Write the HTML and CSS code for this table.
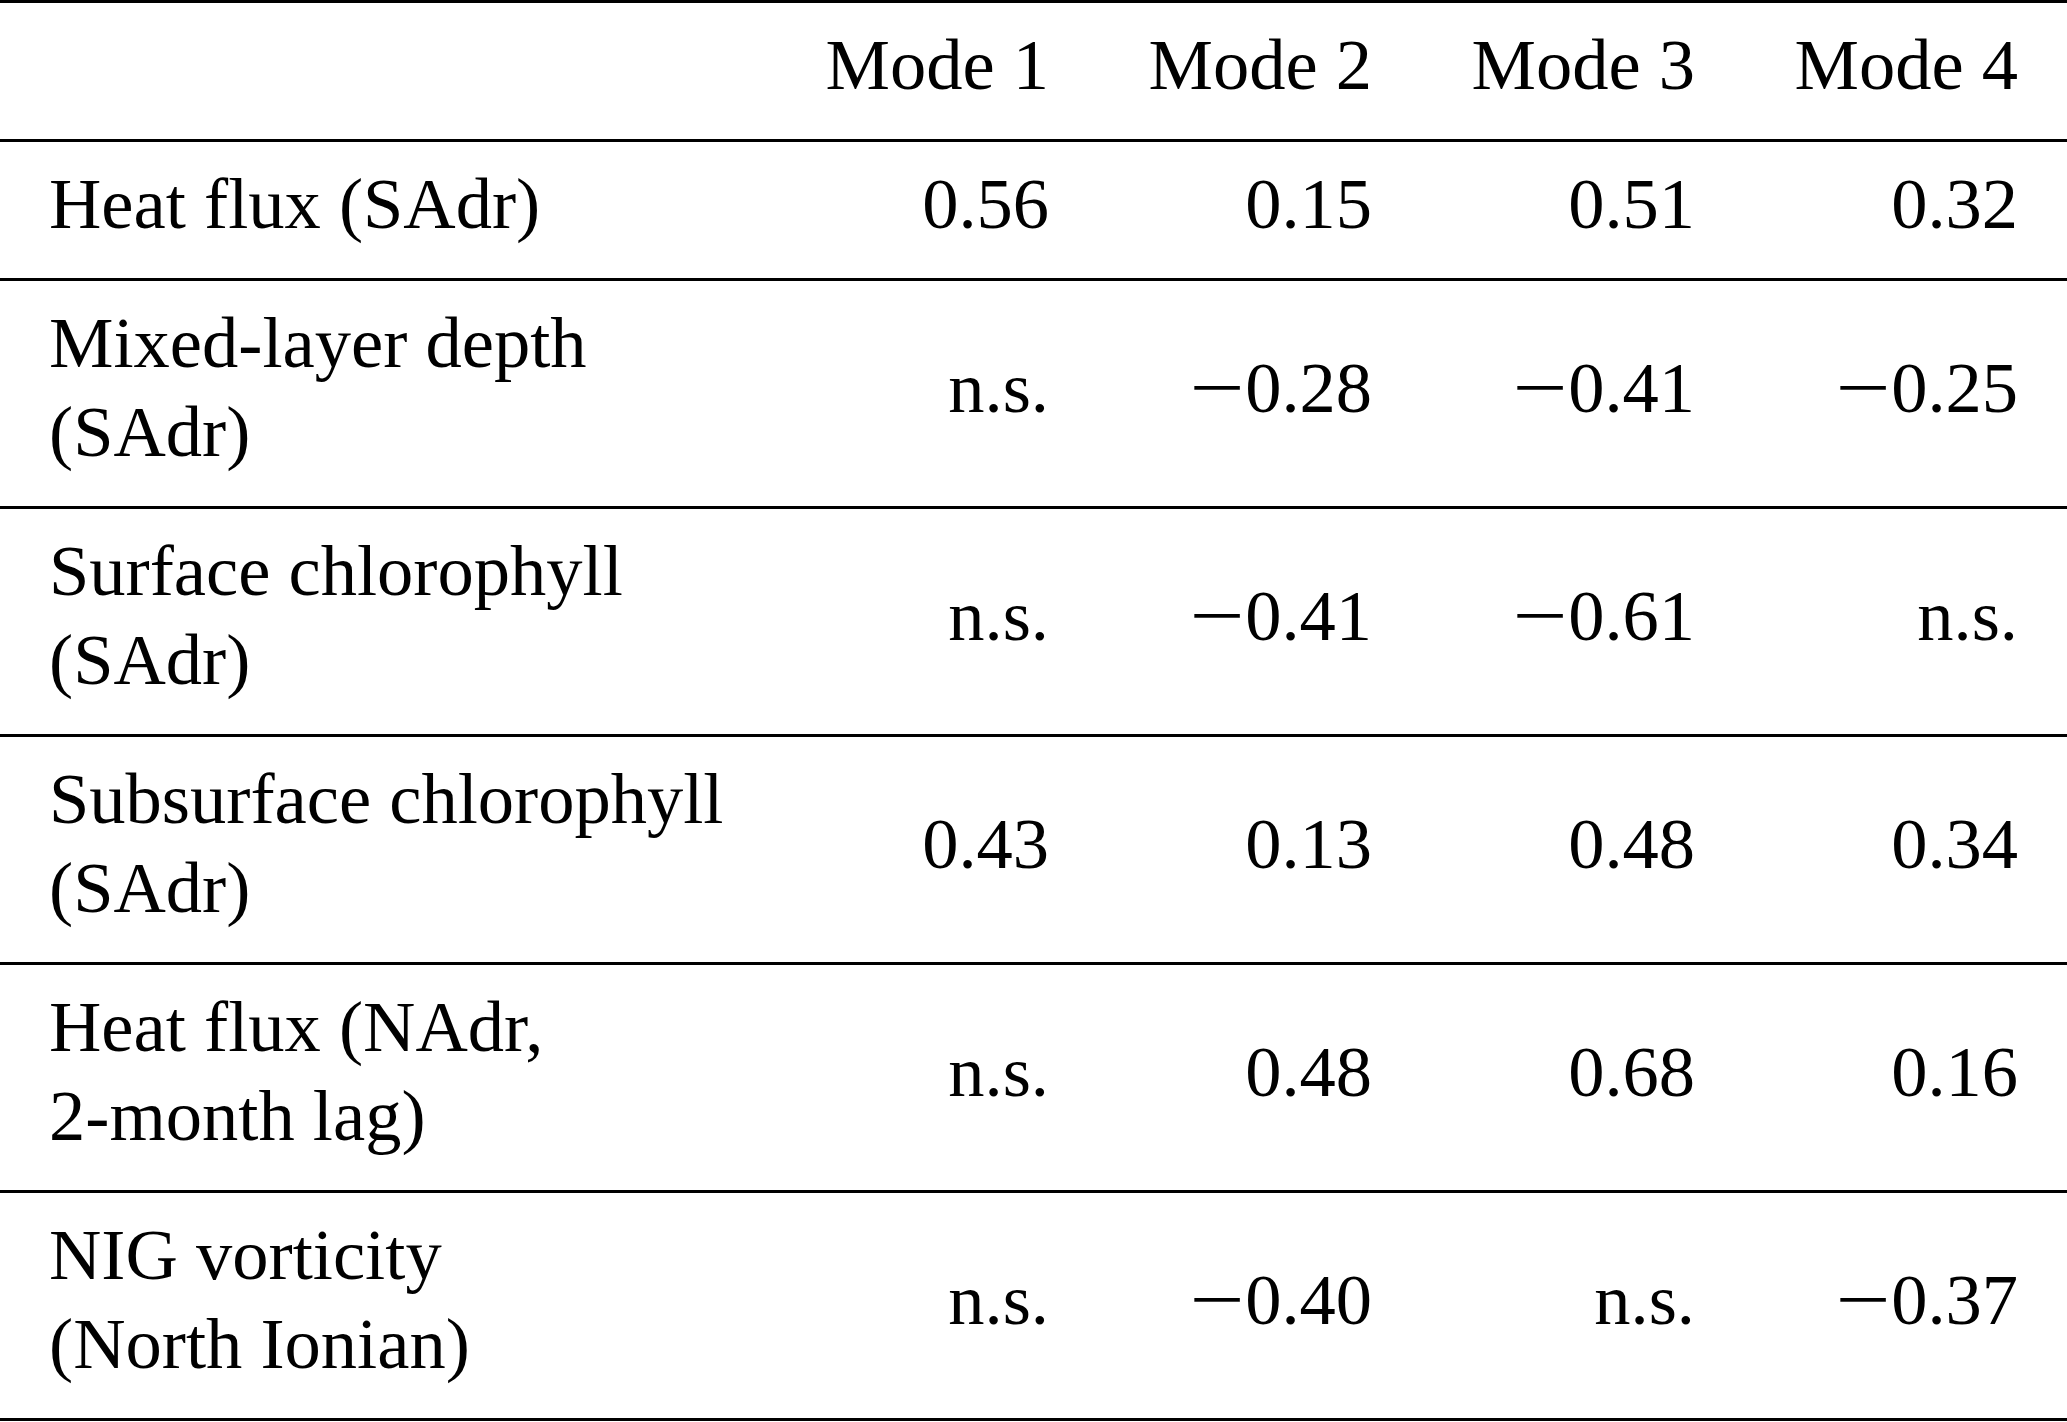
FILE: index.html
```html
<!DOCTYPE html>
<html lang="en">
<head>
<meta charset="utf-8">
<title>Mode correlations</title>
<link rel="stylesheet" href="styles.css">
</head>
<body>
<table class="corr">
  <colgroup>
    <col class="c-label">
    <col class="c-num">
    <col class="c-num">
    <col class="c-num">
    <col class="c-num">
  </colgroup>
  <thead>
    <tr>
      <th class="label"></th>
      <th class="num">Mode 1</th>
      <th class="num">Mode 2</th>
      <th class="num">Mode 3</th>
      <th class="num">Mode 4</th>
    </tr>
  </thead>
  <tbody>
    <tr>
      <td class="label">Heat flux (SAdr)</td>
      <td class="num">0.56</td>
      <td class="num">0.15</td>
      <td class="num">0.51</td>
      <td class="num">0.32</td>
    </tr>
    <tr>
      <td class="label">Mixed-layer depth<br>(SAdr)</td>
      <td class="num">n.s.</td>
      <td class="num"><span class="minus">−</span>0.28</td>
      <td class="num"><span class="minus">−</span>0.41</td>
      <td class="num"><span class="minus">−</span>0.25</td>
    </tr>
    <tr>
      <td class="label">Surface chlorophyll<br>(SAdr)</td>
      <td class="num">n.s.</td>
      <td class="num"><span class="minus">−</span>0.41</td>
      <td class="num"><span class="minus">−</span>0.61</td>
      <td class="num">n.s.</td>
    </tr>
    <tr>
      <td class="label">Subsurface chlorophyll<br>(SAdr)</td>
      <td class="num">0.43</td>
      <td class="num">0.13</td>
      <td class="num">0.48</td>
      <td class="num">0.34</td>
    </tr>
    <tr>
      <td class="label">Heat flux (NAdr,<br>2-month lag)</td>
      <td class="num">n.s.</td>
      <td class="num">0.48</td>
      <td class="num">0.68</td>
      <td class="num">0.16</td>
    </tr>
    <tr>
      <td class="label">NIG vorticity<br>(North Ionian)</td>
      <td class="num">n.s.</td>
      <td class="num"><span class="minus">−</span>0.40</td>
      <td class="num">n.s.</td>
      <td class="num"><span class="minus">−</span>0.37</td>
    </tr>
  </tbody>
</table>
</body>
</html>
```

FILE: styles.css
```css
html, body {
  margin: 0;
  padding: 0;
  background: #ffffff;
}

body {
  font-family: "Liberation Serif", "Times New Roman", serif;
  color: #000000;
}

.corr {
  width: 2067px;
  table-layout: fixed;
  border-collapse: collapse;
  border-spacing: 0;
  border-top: 3px solid #000000;
  font-size: 72.5px;
  line-height: 89px;
}

.c-label {
  width: 775px;
}

.c-num {
  width: 323px;
}

.corr th,
.corr td {
  padding: 17px 49px 30px 49px;
  border-bottom: 3px solid #000000;
  vertical-align: middle;
  font-weight: normal;
  white-space: nowrap;
}

.corr .label {
  text-align: left;
  vertical-align: top;
}

.corr .num {
  text-align: right;
}

.minus {
  display: inline-block;
  margin-left: 14px;
  transform: scaleX(1.35);
  transform-origin: right center;
}
```
